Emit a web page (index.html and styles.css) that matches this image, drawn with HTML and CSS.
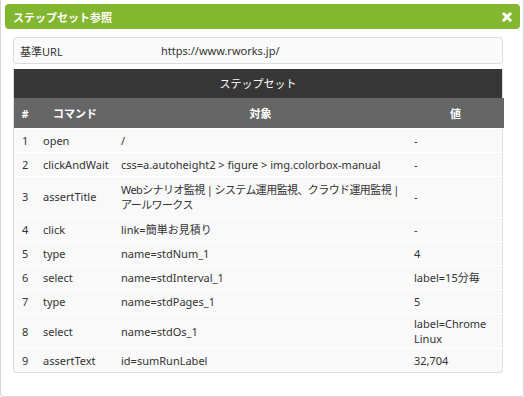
FILE: index.html
```html
<!DOCTYPE html>
<html lang="ja">
<head>
    <meta charset="UTF-8">
    <meta name="viewport" content="width=device-width, initial-scale=1.0">
    <title>ステップセット参照</title>
    <link rel="stylesheet" href="styles.css">
</head>
<body>
    <div class="dialog">
        <div class="titlebar">
            <span class="title">ステップセット参照</span>
            <span class="close">
                <svg width="10" height="10" viewBox="0 0 10 10">
                    <path d="M1.8 1.8 L8.2 8.2 M8.2 1.8 L1.8 8.2" stroke="#fff" stroke-width="3" stroke-linecap="round"/>
                </svg>
            </span>
        </div>

        <div class="content">
            <div class="base-url">
                <span class="label">基準URL</span>
                <span class="value">https://www.rworks.jp/</span>
            </div>

            <div class="step-panel">
                <div class="set-title">ステップセット</div>
                <table class="steps">
                    <colgroup>
                        <col class="col-no">
                        <col class="col-cmd">
                        <col class="col-target">
                        <col class="col-value">
                    </colgroup>
                    <thead>
                        <tr>
                            <th>#</th>
                            <th>コマンド</th>
                            <th>対象</th>
                            <th>値</th>
                        </tr>
                    </thead>
                    <tbody>
                        <tr><td>1</td><td>open</td><td>/</td><td>-</td></tr>
                        <tr><td>2</td><td>clickAndWait</td><td>css=a.autoheight2 &gt; figure &gt; img.colorbox-manual</td><td>-</td></tr>
                        <tr class="two-line"><td>3</td><td>assertTitle</td><td class="narrow">Webシナリオ監視 | システム運用監視、クラウド運用監視 |<br>アールワークス</td><td>-</td></tr>
                        <tr><td>4</td><td>click</td><td>link=簡単お見積り</td><td>-</td></tr>
                        <tr><td>5</td><td>type</td><td>name=stdNum_1</td><td>4</td></tr>
                        <tr><td>6</td><td>select</td><td>name=stdInterval_1</td><td>label=15分毎</td></tr>
                        <tr><td>7</td><td>type</td><td>name=stdPages_1</td><td>5</td></tr>
                        <tr class="two-line compact"><td>8</td><td>select</td><td>name=stdOs_1</td><td>label=Chrome<br>Linux</td></tr>
                        <tr><td>9</td><td>assertText</td><td>id=sumRunLabel</td><td>32,704</td></tr>
                    </tbody>
                </table>
            </div>
        </div>
    </div>
</body>
</html>
```

FILE: styles.css
```css
body {
    margin: 0;
    font-family: "Noto Sans", "Noto Sans CJK JP", sans-serif;
    font-size: 11px;
    color: #333;
    background-color: #fff;
}

.dialog {
    box-sizing: border-box;
    width: 524px;
    height: 397px;
    border: 1px solid #d6d6d6;
    border-top: none;
    border-radius: 0 0 4px 4px;
    padding: 4px 3px 0 4px;
}

.titlebar {
    height: 25px;
    background-color: #83b72f;
    border-radius: 4px;
    display: flex;
    align-items: center;
    justify-content: space-between;
    padding: 0 8px;
    color: #fff;
    font-weight: bold;
    font-size: 11px;
}

.close {
    display: flex;
    align-items: center;
}

.content {
    padding: 8px 17px 0 8px;
}

.base-url {
    box-sizing: border-box;
    height: 27px;
    display: flex;
    align-items: center;
    padding: 0 6px;
    background-color: #fafafa;
    border: 1px solid #dedede;
    border-radius: 3px;
}

.base-url .label {
    width: 141px;
}

.step-panel {
    margin-top: 5px;
    border: 1px solid #dedede;
    border-top: none;
    border-radius: 0 0 3px 3px;
    background-color: #f9f9f9;
}

.set-title {
    height: 29px;
    line-height: 29px;
    background-color: #363636;
    color: #fff;
    text-align: center;
    font-size: 11px;
}

.steps {
    width: 100%;
    border-collapse: collapse;
    table-layout: fixed;
}

.col-no { width: 22px; }
.col-cmd { width: 78px; }
.col-target { width: 293px; }
.col-value { width: 97px; }

.steps th {
    height: 30px;
    padding: 0;
    background-color: #666;
    color: #fff;
    font-weight: bold;
    text-align: center;
}

.steps td {
    padding: 5px 7px 4px;
    line-height: 14px;
    border-top: 1px solid #fff;
    vertical-align: middle;
    white-space: nowrap;
}

.steps td:first-child {
    padding-left: 8px;
    padding-right: 0;
}

.steps .two-line td {
    padding-top: 5px;
    padding-bottom: 5px;
}

.steps td.narrow {
    letter-spacing: -0.6px;
    line-height: 15px;
}

.steps .compact td {
    padding-top: 2px;
    padding-bottom: 2px;
    line-height: 15px;
}
```
